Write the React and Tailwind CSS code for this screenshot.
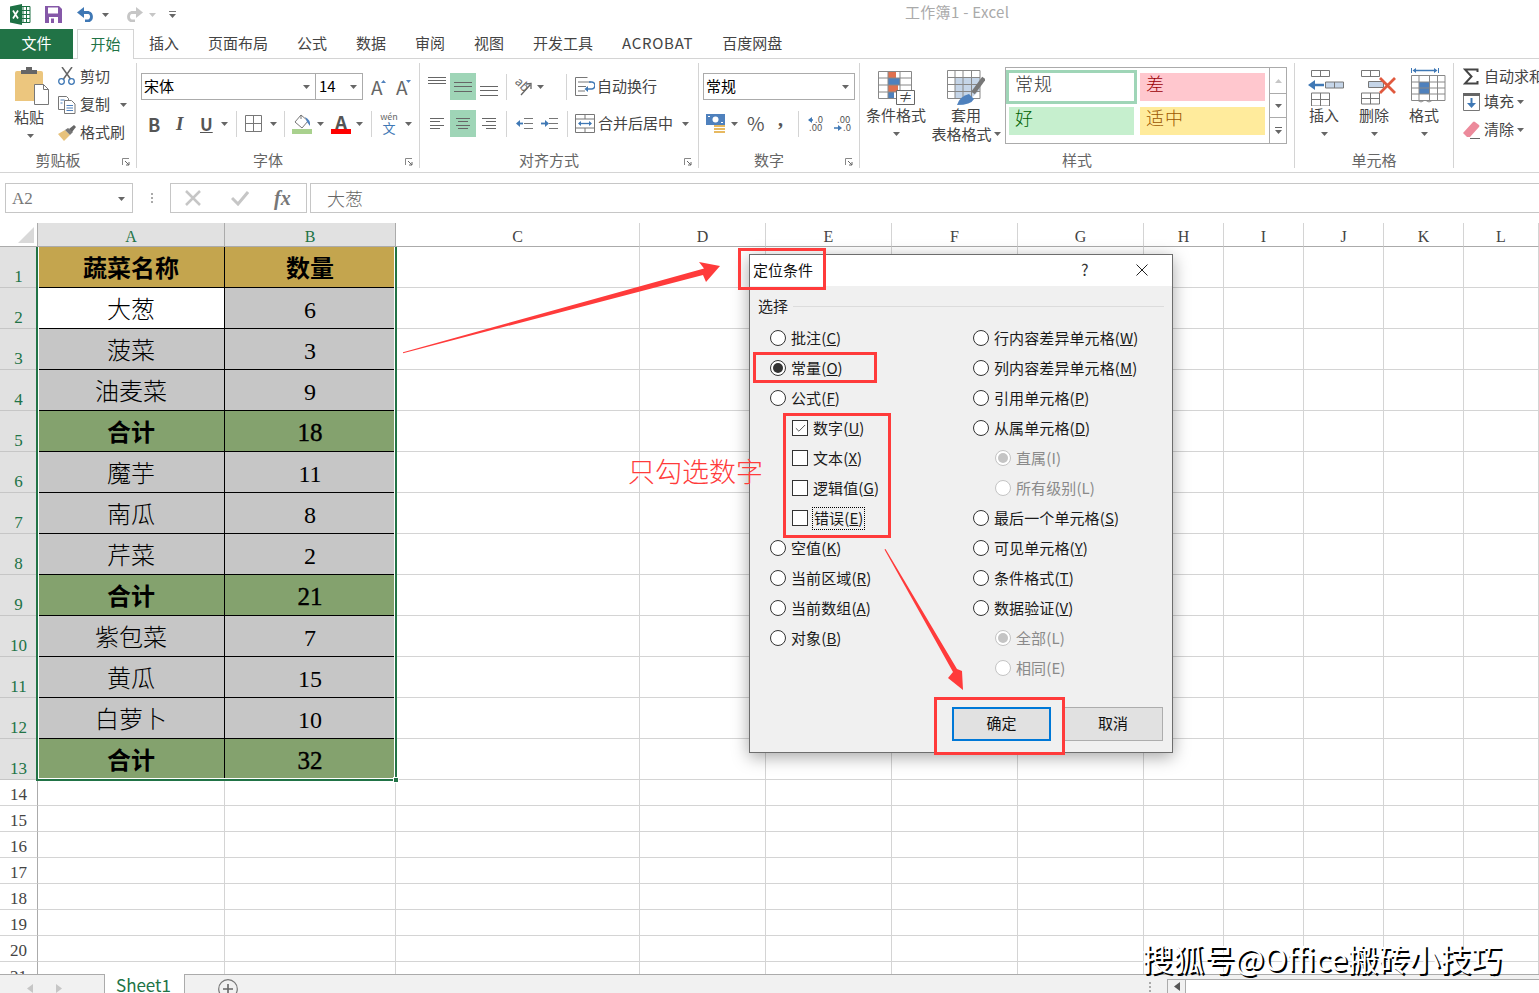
import { Check } from "lucide-react";

const SANS = "font-['Noto_Sans_CJK_SC',sans-serif]";
const SERIF = "font-['Liberation_Serif','Noto_Sans_CJK_SC',serif]";
const COLS = "grid grid-cols-[38px_187px_171px_244px_126px_126px_126px_126px_80px_80px_80px_80px_75px]";

const LETTERS = ["A", "B", "C", "D", "E", "F", "G", "H", "I", "J", "K", "L"];

const tableRows = [
  ["蔬菜名称", "数量", "head"],
  ["大葱", "6", "first"],
  ["菠菜", "3", "item"],
  ["油麦菜", "9", "item"],
  ["合计", "18", "total"],
  ["魔芋", "11", "item"],
  ["南瓜", "8", "item"],
  ["芹菜", "2", "item"],
  ["合计", "21", "total"],
  ["紫包菜", "7", "item"],
  ["黄瓜", "15", "item"],
  ["白萝卜", "10", "item"],
  ["合计", "32", "total"],
];

const nameFills = {
  head: "bg-[#c4a54e] font-bold",
  first: "bg-white font-light",
  item: "bg-[#c6c6c6] font-light",
  total: "bg-[#84a26e] font-bold",
};

const countFills = {
  head: "bg-[#c4a54e] font-bold",
  first: "bg-[#c6c6c6]",
  item: "bg-[#c6c6c6]",
  total: "bg-[#84a26e] text-[25px] [-webkit-text-stroke:0.4px_#000]",
};

function Caret({ className = "", color = "#666" }) {
  return (
    <svg width="7" height="4" className={`shrink-0 ${className}`}>
      <path d="M0 0h7L3.5 4z" fill={color} />
    </svg>
  );
}

function Sep({ className = "" }) {
  return <div className={`h-[26px] w-px shrink-0 bg-[#d4d4d4] ${className}`} />;
}

function Launcher() {
  return (
    <svg width="8" height="8" className="shrink-0">
      <path d="M.5 7V.5H7" fill="none" stroke="#888" />
      <path d="M3 3l4 4M7 4v3H4" fill="none" stroke="#666" />
    </svg>
  );
}

function Group({ className, label, launcher, children }) {
  return (
    <div className={`flex h-[105px] shrink-0 flex-col border-r border-[#d4d4d4] ${className}`}>
      <div className="h-[89px]">{children}</div>
      <div className="flex h-[16px] items-center">
        <div className="flex-1 pb-[2px] text-center text-[15px] leading-none text-[#666]">{label}</div>
        {launcher && (
          <div className="flex w-[20px] justify-center pt-[3px]">
            <Launcher />
          </div>
        )}
      </div>
    </div>
  );
}

function Combo({ className, text }) {
  return (
    <div className={`flex h-[27px] shrink-0 items-center justify-between border border-[#ababab] bg-white pl-[2px] pr-[5px] text-[15px] text-black ${className}`}>
      <span className="pb-[2px]">{text}</span>
      <Caret />
    </div>
  );
}

function ExcelLogo() {
  return (
    <svg width="21" height="21" className="shrink-0">
      <path d="M8 2.5h12v16H8z" fill="#fff" stroke="#1e7145" />
      <path d="M13 2.5v16M8 6.5h12M8 10.5h12M8 14.5h12M16.5 2.5v16" stroke="#1e7145" />
      <path d="M0 2.5L12 0v21L0 18.5z" fill="#1e7145" />
      <path d="M3 6.5l5 8M8 6.5l-5 8" stroke="#fff" strokeWidth="1.7" />
    </svg>
  );
}

function SaveIcon() {
  return (
    <svg width="17" height="17" className="shrink-0">
      <path d="M0 0h14l3 3v14H0z" fill="#8558a8" />
      <path d="M3 1.5h10v6H3z" fill="#fff" />
      <path d="M4 11h9v6H4z" fill="#fff" />
      <path d="M6 12.5h3v4.5H6z" fill="#8558a8" />
    </svg>
  );
}

function UndoIcon({ color, flip }) {
  return (
    <svg width="19" height="15" className={`shrink-0 ${flip ? "-scale-x-100" : ""}`}>
      <path d="M4 5.5h7.500a4.500 4.500 0 0 1 0 8.500H8" fill="none" stroke={color} strokeWidth="2.800" />
      <path d="M7 0L0 5.500 7 11z" fill={color} />
    </svg>
  );
}

function Scissors() {
  return (
    <svg width="18" height="18" className="shrink-0">
      <path d="M4 0l8.5 12M14 0L5.5 12" fill="none" stroke="#666" strokeWidth="1.5" />
      <circle cx="3.5" cy="14.5" r="2.8" fill="none" stroke="#3f78b5" strokeWidth="1.3" />
      <circle cx="13.5" cy="14.5" r="2.8" fill="none" stroke="#3f78b5" strokeWidth="1.3" />
    </svg>
  );
}

function CopyIcon() {
  return (
    <svg width="18" height="18" className="shrink-0">
      <path d="M.5.5h8l2 2v11H.5z" fill="#fff" stroke="#777" />
      <path d="M6.5 4.5h7l3.5 3.5v9.5H6.5z" fill="#fff" stroke="#777" />
      <path d="M8.5 9.5h6.5M8.5 12h6.5M8.5 14.5h6.5" stroke="#4f81bd" />
      <path d="M2.5 4h4M2.5 7h2" stroke="#4f81bd" />
    </svg>
  );
}

function Painter() {
  return (
    <svg width="18" height="16" className="shrink-0">
      <path d="M0 9l7-4 5 5-6 6z" fill="#e7c27c" />
      <path d="M7 5l3-2 5 4-3 3z" fill="#777" />
      <path d="M11 4l5-4 2 2-4 5z" fill="#666" />
    </svg>
  );
}

function PasteIcon() {
  return (
    <svg width="35" height="38" className="shrink-0">
      <path d="M0 6q0-2 2-2h24q2 0 2 2v28H0z" fill="#ecc67e" />
      <path d="M6 3h5V0h6v3h5v4H6z" fill="#666" />
      <path d="M19.5 17.5h9l5 5v15h-14z" fill="#fff" stroke="#777" />
      <path d="M28.5 17.5v5h5" fill="none" stroke="#777" />
    </svg>
  );
}

function BorderIcon() {
  return (
    <svg width="17" height="17" className="shrink-0">
      <path d="M.5.5h16v16H.5zM8.5.5v16M.5 8.5h16" fill="none" stroke="#777" />
    </svg>
  );
}

function FillIcon() {
  return (
    <div className="flex w-[20px] shrink-0 flex-col items-center">
      <svg width="20" height="15">
        <path d="M9 1l7 6-6 7-7-6z" fill="#fff" stroke="#777" />
        <path d="M9 1v4" stroke="#777" />
        <path d="M13 3q6 3 5 9l-3-4z" fill="#4f81bd" />
      </svg>
      <div className="h-[5px] w-[20px] bg-[#a9d18e]" />
    </div>
  );
}

function FontColor() {
  return (
    <div className="flex w-[20px] shrink-0 flex-col items-center">
      <div className="h-[15px] text-[19px] font-bold leading-[16px] text-[#555]">A</div>
      <div className="h-[5px] w-[20px] bg-[#ff0000]" />
    </div>
  );
}

function Wen() {
  return (
    <div className="flex w-[16px] shrink-0 flex-col items-center pb-[2px] leading-none">
      <span className="text-[9px] leading-[9px] text-[#666]">wén</span>
      <span className="text-[13px] leading-[13px] text-[#3f78b5]">文</span>
    </div>
  );
}

function AlignV({ ys }) {
  return (
    <svg width="18" height="27" className="shrink-0">
      {ys.map((y) => (
        <path key={y} d={`M0 ${y + 0.5}h18`} stroke="#666" />
      ))}
    </svg>
  );
}

function AlignH({ w = 14, mode }) {
  const rows = [
    [8, w],
    [11, w - 4],
    [15, w],
    [18, w - 4],
  ];
  return (
    <svg width={w} height="27" className="shrink-0">
      {rows.map(([y, len]) => {
        const x = mode === "left" ? 0 : mode === "right" ? w - len : (w - len) / 2;
        return <path key={y} d={`M${x} ${y + 0.5}h${len}`} stroke="#666" />;
      })}
    </svg>
  );
}

function Orient() {
  return (
    <svg width="18" height="18" className="shrink-0 overflow-visible">
      <text x="0" y="9" fontSize="12" fill="#666" transform="rotate(45 5 6)">ab</text>
      <path d="M6 17l9-10M11 6l5-.5V11" fill="none" stroke="#666" strokeWidth="1.300" />
    </svg>
  );
}

function WrapIcon() {
  return (
    <svg width="20" height="19" className="shrink-0">
      <path d="M.5.5h12M.5.5v18h12M3 5h13M3 9.500h8M3 14h7" fill="none" stroke="#777" />
      <path d="M14 5h2.500a2.500 2.500 0 0 1 0 7H11" fill="none" stroke="#3f78b5" strokeWidth="1.600" />
      <path d="M13 9l-3.500 3 3.500 3z" fill="#3f78b5" />
    </svg>
  );
}

function MergeIcon() {
  return (
    <svg width="20" height="19" className="shrink-0">
      <path d="M.5.5h19v18H.5zM.5 5h19M.5 14h19M10 .5V5M10 14v4.500" fill="none" stroke="#777" />
      <path d="M4 9.500h12" stroke="#3f78b5" strokeWidth="1.300" />
      <path d="M6 7L3 9.500 6 12zM14 7l3 2.500-3 2.500z" fill="#3f78b5" />
    </svg>
  );
}

function IndentIcon({ right }) {
  return (
    <svg width="17" height="11" className="shrink-0">
      <path d="M8 .5h9M8 5.500h9M8 10.500h9" stroke="#777" />
      {right ? (
        <>
          <path d="M0 5.500h5" stroke="#3f78b5" strokeWidth="1.800" />
          <path d="M4 2l4 3.500-4 3.500z" fill="#3f78b5" />
        </>
      ) : (
        <>
          <path d="M2 5.500h5" stroke="#3f78b5" strokeWidth="1.800" />
          <path d="M4 2L0 5.500 4 9z" fill="#3f78b5" />
        </>
      )}
    </svg>
  );
}

function MoneyIcon() {
  return (
    <svg width="20" height="20" className="shrink-0">
      <path d="M0 0h19v11H0z" fill="#4f81bd" />
      <circle cx="9.500" cy="5.500" r="3" fill="#fff" />
      <path d="M2 2.500h2M15 8.500h2" stroke="#fff" />
      <path d="M8 12h11M8 15h11M8 18h11" stroke="#e7b961" strokeWidth="2" />
    </svg>
  );
}

function DecimalIcon({ inc }) {
  return (
    <svg width="17" height="17" className="shrink-0 overflow-visible">
      {inc ? (
        <>
          <path d="M1 5h4" stroke="#3f78b5" strokeWidth="1.500" />
          <path d="M4 2L0 5l4 3z" fill="#3f78b5" />
          <text x="7" y="8" fontSize="9.500" fill="#555">.0</text>
          <text x="1" y="16" fontSize="9.500" fill="#555">.00</text>
        </>
      ) : (
        <>
          <text x="3" y="8" fontSize="9.500" fill="#555">.00</text>
          <path d="M0 13h5" stroke="#3f78b5" strokeWidth="1.500" />
          <path d="M4 10l4 3-4 3z" fill="#3f78b5" />
          <text x="9" y="16" fontSize="9.500" fill="#555">.0</text>
        </>
      )}
    </svg>
  );
}

function CondIcon() {
  return (
    <svg width="37" height="34" className="overflow-visible">
      <path d="M10 .5h8V7h-8z" fill="#e0714f" />
      <path d="M10 7h12v7H10z" fill="#4f81bd" />
      <path d="M10 14h10v7H10z" fill="#e0714f" />
      <path d="M10 21h6v6.500h-6z" fill="#4f81bd" />
      <path d="M.5.5h33v27H.5zM10 .5v27M22 .5v27M.5 7h33M.5 14h33M.5 21h33" fill="none" stroke="#888" />
      <path d="M18.500 19.500h18v14h-18z" fill="#fff" stroke="#666" />
      <text x="27.500" y="31" fontSize="14" textAnchor="middle" fill="#444">≠</text>
    </svg>
  );
}

function TableIcon() {
  return (
    <svg width="38" height="35">
      <path d="M8 8h25v12l-9 8.500H8z" fill="#c5d5e8" />
      <path d="M.5.5h32.500v28H.5zM8 .5v28M16 .5v28M24.500 .5v28M.5 7.500h32.500M.5 14.500h32.500M.5 21.500h32.500" fill="none" stroke="#888" />
      <path d="M37 8L26 23" stroke="#777" strokeWidth="4.500" />
      <path d="M10 35q3-9 12-11l5 5q-3 6-17 6z" fill="#4f81bd" />
    </svg>
  );
}

function InsertIcon() {
  return (
    <svg width="37" height="36">
      <path d="M3.500.5h18v6h-18zM12.500.5v6" fill="none" stroke="#777" />
      <path d="M17.500 12h18v6h-18zM26.500 12v6" fill="#c5d5e8" stroke="#777" />
      <path d="M3.500 23h18v13h-18zM12.500 23v13M3.500 29.500h18" fill="none" stroke="#777" />
      <path d="M5 15h11" stroke="#3f78b5" strokeWidth="2.500" />
      <path d="M7 10L0 15l7 5z" fill="#3f78b5" />
    </svg>
  );
}

function DeleteIcon() {
  return (
    <svg width="37" height="36">
      <path d="M.5.5h18v6H.5zM9.500.5v6" fill="none" stroke="#777" />
      <path d="M7.500 11.500h15v6h-15z" fill="#c5d5e8" stroke="#777" />
      <path d="M.5 23h18v11H.5zM9.500 23v11M.5 28.500h18" fill="none" stroke="#777" />
      <path d="M19 8l15 15M34 8L19 23" stroke="#e0593e" strokeWidth="2.800" />
    </svg>
  );
}

function FormatIcon() {
  return (
    <svg width="35" height="36">
      <path d="M.5 0v5M27.500 0v5" stroke="#3f78b5" />
      <path d="M4 2.500h20" stroke="#3f78b5" strokeWidth="1.500" />
      <path d="M5 0L1.500 2.500 5 5zM23 0l3.500 2.500L23 5z" fill="#3f78b5" />
      <path d="M8 14h10.500v12H8z" fill="#4f81bd" />
      <path d="M.5 7.500h33.500v25H.5zM8 7.500v25M18.500 7.500v25M26.500 7.500v25M.5 14h33.500M.5 20h33.500M.5 26h33.500" fill="none" stroke="#888" />
      <path d="M7 32.500q3 3 6 0M15 32.500q3 3 6 0" fill="none" stroke="#888" />
    </svg>
  );
}

function SigmaIcon() {
  return (
    <svg width="16" height="17" className="shrink-0">
      <path d="M14.500 4V1.500H2L8.500 8.500 2 15.500h12.500V13" fill="none" stroke="#444" strokeWidth="2" />
    </svg>
  );
}

function FillDown() {
  return (
    <svg width="17" height="18" className="shrink-0">
      <path d="M.5.5h16v17H.5z" fill="#fff" stroke="#777" />
      <path d="M0 0h17v3H0z" fill="#666" />
      <path d="M8.500 5v8" stroke="#3f78b5" strokeWidth="2" />
      <path d="M4 10l4.500 5 4.500-5z" fill="#3f78b5" />
    </svg>
  );
}

function Eraser() {
  return (
    <svg width="18" height="18" className="shrink-0">
      <path d="M0 12L10 1q1-1 2 0l4 3q1 1 0 2L7 16H4z" fill="#ec8a9b" />
      <path d="M7 17.500h10" stroke="#666" />
    </svg>
  );
}

function BigButton({ icon, lines, iconClass = "mt-[7px]", className }) {
  return (
    <div className={`flex shrink-0 flex-col items-center text-[15px] leading-none text-[#444] ${className}`}>
      <div className={`flex h-[36px] items-start ${iconClass}`}>{icon}</div>
      {lines}
    </div>
  );
}

function Ribbon() {
  return (
    <div className="flex h-[114px] border-b border-[#d4d4d4] pt-[4px] text-[15px] leading-none text-[#444]">
      <Group className="w-[137px]" label="剪贴板" launcher>
        <div className="flex">
          <div className="ml-[14px] flex w-[36px] flex-col items-start">
            <div className="ml-[1px] mt-[4px] h-[38px]">
              <PasteIcon />
            </div>
            <span className="mt-[4px]">粘贴</span>
            <Caret className="ml-[13px] mt-[10px]" />
          </div>
          <div className="ml-[8px] flex flex-col">
            <div className="flex h-[26px] items-center gap-[4px]">
              <Scissors />
              <span className="pb-[2px]">剪切</span>
            </div>
            <div className="mt-[3px] flex h-[26px] items-center gap-[4px]">
              <CopyIcon />
              <span className="pb-[4px]">复制</span>
              <Caret className="ml-[6px]" />
            </div>
            <div className="mt-[2px] flex h-[26px] items-center gap-[4px]">
              <Painter />
              <span className="pb-[4px]">格式刷</span>
            </div>
          </div>
        </div>
      </Group>

      <Group className="w-[283px]" label="字体" launcher>
        <div className="mt-[10px] flex h-[27px] items-center pl-[4px]">
          <Combo className="w-[175px]" text="宋体" />
          <Combo className="-ml-px w-[48px] pl-[3px]" text="14" />
          <div className="ml-[8px] flex w-[15px] items-start text-[19px] text-[#666]">
            A
            <svg width="5" height="3" className="-ml-[2px] mt-[3px] shrink-0"><path d="M0 3h5L2.500 0z" fill="#4f81bd" /></svg>
          </div>
          <div className="ml-[10px] flex w-[15px] items-start text-[19px] text-[#666]">
            A
            <svg width="5" height="3" className="-ml-[2px] mt-[3px] shrink-0"><path d="M0 0h5L2.500 3z" fill="#4f81bd" /></svg>
          </div>
        </div>
        <div className="mt-[10px] flex h-[27px] items-center">
          <span className="ml-[11px] w-[11px] text-[18px] font-bold text-[#555]">B</span>
          <span className={`ml-[17px] w-[11px] text-[19px] font-bold italic text-[#555] ${SERIF}`}>I</span>
          <span className="ml-[13px] w-[12px] text-[17px] font-bold text-[#555] underline">U</span>
          <Caret className="ml-[9px]" />
          <Sep className="ml-[8px]" />
          <div className="ml-[8px]"><BorderIcon /></div>
          <Caret className="ml-[8px]" />
          <Sep className="ml-[7px]" />
          <div className="ml-[7px]"><FillIcon /></div>
          <Caret className="ml-[5px]" />
          <div className="ml-[7px]"><FontColor /></div>
          <Caret className="ml-[5px]" />
          <Sep className="ml-[8px]" />
          <div className="ml-[9px]"><Wen /></div>
          <Caret className="ml-[8px]" />
        </div>
      </Group>

      <Group className="w-[279px]" label="对齐方式" launcher>
        <div className="mt-[10px] flex h-[27px] items-center">
          <div className="ml-[8px]"><AlignV ys={[4, 7, 10]} /></div>
          <div className="ml-[4px] h-[27px] w-[26px] bg-[#9fd5b7] pl-[4px]"><AlignV ys={[9, 13, 18]} /></div>
          <div className="ml-[4px]"><AlignV ys={[13, 17, 22]} /></div>
          <Sep className="ml-[8px]" />
          <div className="ml-[8px]"><Orient /></div>
          <Caret className="ml-[4px]" />
          <Sep className="ml-[22px]" />
          <div className="ml-[8px]"><WrapIcon /></div>
          <span className="ml-[2px] pb-[3px]">自动换行</span>
        </div>
        <div className="mt-[10px] flex h-[27px] items-center">
          <div className="ml-[10px]"><AlignH mode="left" /></div>
          <div className="ml-[6px] h-[27px] w-[26px] bg-[#9fd5b7] pl-[6px]"><AlignH mode="center" /></div>
          <div className="ml-[6px]"><AlignH mode="right" /></div>
          <Sep className="ml-[10px]" />
          <div className="ml-[9px]"><IndentIcon /></div>
          <div className="ml-[8px]"><IndentIcon right /></div>
          <Sep className="ml-[9px]" />
          <div className="ml-[7px]"><MergeIcon /></div>
          <span className="ml-[3px] pb-[2px]">合并后居中</span>
          <Caret className="ml-[9px]" />
        </div>
      </Group>

      <Group className="w-[161px]" label="数字" launcher>
        <div className="mt-[10px] flex h-[27px] pl-[4px]">
          <Combo className="w-[152px]" text="常规" />
        </div>
        <div className="mt-[10px] flex h-[27px] items-center">
          <div className="ml-[7px]"><MoneyIcon /></div>
          <Caret className="ml-[5px]" />
          <span className="ml-[9px] w-[16px] pb-[2px] text-[19px] text-[#555]">%</span>
          <span className={`ml-[15px] w-[6px] pb-[10px] text-[20px] font-bold text-[#555] ${SERIF}`}>,</span>
          <Sep className="ml-[14px]" />
          <div className="ml-[9px]"><DecimalIcon inc /></div>
          <div className="ml-[9px]"><DecimalIcon /></div>
        </div>
      </Group>

      <Group className="w-[435px]" label="样式">
        <div className="flex">
          <BigButton
            className="ml-[6px] w-[60px]"
            icon={<div className="ml-[1px]"><CondIcon /></div>}
            iconClass="mt-[8px]"
            lines={
              <>
                <span>条件格式</span>
                <Caret className="mt-[10px]" />
              </>
            }
          />
          <BigButton
            className="ml-[4px] w-[72px]"
            icon={<TableIcon />}
            lines={
              <>
                <span className="mt-[1px]">套用</span>
                <span className="mt-[4px] flex items-center gap-[2px] whitespace-nowrap">表格格式<Caret /></span>
              </>
            }
          />
          <div className="ml-[3px] mt-[4px] flex h-[77px] w-[282px] border border-[#ababab] bg-white">
            <div className="grid grid-cols-[125px_125px] grid-rows-[28px_28px] gap-[6px] pl-[3px] pr-[4px] pt-[5px] text-[18px] leading-[20px]">
              <div className="bg-white pl-[6px] font-light tracking-[1px] text-[#333] outline-[3px] outline-[#9fd5b7]">常规</div>
              <div className="bg-[#ffc7ce] pl-[6px] font-light text-[#9c0006]">差</div>
              <div className="bg-[#c6efce] pl-[6px] font-light text-[#006100]">好</div>
              <div className="bg-[#ffeb9c] pl-[6px] font-light tracking-[1px] text-[#9c5700]">适中</div>
            </div>
            <div className="flex flex-1 flex-col border-l border-[#ababab]">
              <div className="flex h-[26px] items-center justify-center border-b border-[#ababab]">
                <svg width="7" height="4"><path d="M0 4h7L3.500 0z" fill="#c6c6c6" /></svg>
              </div>
              <div className="flex h-[24px] items-center justify-center border-b border-[#ababab]">
                <Caret />
              </div>
              <div className="flex flex-1 flex-col items-center justify-center gap-[2px]">
                <div className="h-px w-[7px] bg-[#666]" />
                <Caret />
              </div>
            </div>
          </div>
        </div>
      </Group>

      <Group className="w-[159px]" label="单元格">
        <div className="flex pl-[4px]">
          <BigButton className="w-[50px]" icon={<div className="ml-[5px]"><InsertIcon /></div>} lines={<><span className="mt-[1px]">插入</span><Caret className="mt-[10px]" /></>} />
          <BigButton className="w-[50px]" icon={<div className="ml-[10px]"><DeleteIcon /></div>} lines={<><span className="mt-[1px]">删除</span><Caret className="mt-[10px]" /></>} />
          <BigButton className="w-[50px]" icon={<div className="ml-[8px]"><FormatIcon /></div>} iconClass="mt-[5px]" lines={<><span className="mt-[3px]">格式</span><Caret className="mt-[10px]" /></>} />
        </div>
      </Group>

      <div className="flex h-[89px] min-w-0 flex-1 flex-col overflow-hidden pl-[9px] whitespace-nowrap">
        <div className="flex h-[26px] shrink-0 items-center gap-[5px]">
          <SigmaIcon />
          <span className="pb-[2px]">自动求和</span>
        </div>
        <div className="flex h-[26px] shrink-0 items-center gap-[4px]">
          <FillDown />
          <span className="pb-[4px]">填充</span>
          <Caret className="-ml-[1px]" />
        </div>
        <div className="mt-[2px] flex h-[26px] shrink-0 items-center gap-[3px]">
          <Eraser />
          <span className="pb-[4px]">清除</span>
          <Caret />
        </div>
      </div>
    </div>
  );
}

function FormulaBar() {
  return (
    <div className="mt-[10px] flex h-[30px] pl-[5px]">
      <div className={`flex w-[128px] items-center justify-between border border-[#c6c6c6] pl-[6px] pr-[7px] pt-[1px] text-[17px] text-[#777] ${SERIF}`}>
        A2
        <Caret />
      </div>
      <div className="flex w-[37px] flex-col items-center justify-center gap-[2px]">
        <div className="h-[2px] w-[2px] bg-[#aaa]" />
        <div className="h-[2px] w-[2px] bg-[#aaa]" />
        <div className="h-[2px] w-[2px] bg-[#aaa]" />
      </div>
      <div className="flex w-[137px] items-center border border-[#c6c6c6]">
        <svg width="16" height="16" className="ml-[14px]">
          <path d="M1 1l14 14M15 1L1 15" stroke="#c6c6c6" strokeWidth="2.500" />
        </svg>
        <svg width="18" height="16" className="ml-[30px]">
          <path d="M1 8l6 6L17 2" fill="none" stroke="#c6c6c6" strokeWidth="3" />
        </svg>
        <span className={`ml-[25px] text-[20px] font-bold italic text-[#777] ${SERIF}`}>fx</span>
      </div>
      <div className="ml-[3px] flex flex-1 items-center border border-r-0 border-[#c6c6c6] pl-[16px] text-[18px] font-light text-[#666]">
        大葱
      </div>
    </div>
  );
}

function ColumnHeader() {
  return (
    <div className={`${COLS} mt-[10px] h-[24px] ${SERIF} text-[16px]`}>
      <div className="flex items-end justify-end border-b border-r border-[#ababab] pb-[3px] pr-[3px]">
        <svg width="16" height="16"><path d="M16 0v16H0z" fill="#d9d9d9" /></svg>
      </div>
      {LETTERS.map((c, i) => (
        <div
          key={c}
          className={
            i < 2
              ? "flex items-end justify-center border-b border-r border-b-[#ababab] border-r-[#ababab] bg-[#e1e1e1] text-[#217346]"
              : "flex items-end justify-center border-b border-r border-b-[#ababab] border-r-[#d4d4d4] text-[#444]"
          }
        >
          <span className="leading-[19px]">{c}</span>
        </div>
      ))}
    </div>
  );
}

function BlankCells({ from }) {
  return LETTERS.slice(from).map((c) => <div key={c} className="border-b border-r border-[#d4d4d4]" />);
}

function SheetGrid() {
  const plain = [14, 15, 16, 17, 18, 19, 20, 21];
  return (
    <div className={`relative min-h-0 flex-1 overflow-hidden ${SERIF}`}>
      {tableRows.map((row, i) => (
        <div key={i} className={`${COLS} h-[41px]`}>
          <div className="flex items-end justify-center border-b border-r border-b-[#c6c6c6] border-r-[#ababab] bg-[#e1e1e1] text-[17px] leading-[21px] text-[#217346]">
            {i + 1}
          </div>
          <div className={`flex items-center justify-center border-b border-r border-black pt-[3px] text-[24px] leading-[36px] text-black ${nameFills[row[2]]}`}>
            {row[0]}
          </div>
          <div className={`flex items-center justify-center border-b border-r border-black pt-[3px] text-[24px] leading-[36px] text-black ${countFills[row[2]]}`}>
            {row[1]}
          </div>
          <BlankCells from={2} />
        </div>
      ))}
      {plain.map((n) => (
        <div key={n} className={`${COLS} h-[26px]`}>
          <div className="flex items-end justify-center border-b border-r border-b-[#d4d4d4] border-r-[#ababab] text-[17px] leading-[20px] text-[#444]">
            {n}
          </div>
          <BlankCells from={0} />
        </div>
      ))}
      {/* selection frame */}
      <div className="absolute left-[36px] top-[-2px] h-[536px] w-[361px] border-2 border-[#217346] shadow-[inset_1px_-1px_0_#fff,inset_-1px_0_0_#fff]" />
      <div className="absolute left-[393px] top-[530px] h-[6px] w-[6px] border border-white bg-[#217346]" />
    </div>
  );
}

function SheetTabs() {
  return (
    <div className="flex h-[19px] border-t border-[#ababab] bg-[#f1f1f1]">
      <div className="flex w-[104px] items-center pl-[27px] pt-[8px]">
        <svg width="6" height="9"><path d="M6 0v9L0 4.500z" fill="#c6c6c6" /></svg>
        <svg width="6" height="9" className="ml-[23px]"><path d="M0 0v9l6-4.500z" fill="#c6c6c6" /></svg>
      </div>
      <div className="-mt-px h-[20px] w-[81px] border-x border-[#ababab] bg-white pl-[11px] text-[17px] leading-[21px] text-[#217346]">
        Sheet1
      </div>
      <svg width="20" height="20" className="ml-[33px] mt-[4px] shrink-0">
        <circle cx="10" cy="10" r="9.300" fill="none" stroke="#777" strokeWidth="1.200" />
        <path d="M10 5v10M5 10h10" stroke="#666" strokeWidth="1.600" />
      </svg>
      <div className="ml-[911px] flex w-[3px] flex-col gap-[2px] pt-[7px]">
        <div className="h-[2px] w-[2px] bg-[#aaa]" />
        <div className="h-[2px] w-[2px] bg-[#aaa]" />
        <div className="h-[2px] w-[2px] bg-[#aaa]" />
      </div>
      <div className="ml-[15px] mt-[4px] flex flex-1 border-l border-t border-[#ababab]">
        <div className="flex w-[18px] items-center justify-center border-r border-[#ababab]">
          <svg width="6" height="9"><path d="M6 0v9L0 4.500z" fill="#555" /></svg>
        </div>
        <div className="flex-1 bg-white" />
      </div>
    </div>
  );
}

function Radio({ on, off }) {
  return (
    <div className={`flex h-[16px] w-[16px] shrink-0 items-center justify-center rounded-full border bg-white ${off ? "border-[#c4c4c4]" : "border-[#333]"}`}>
      {on && <div className={`h-[10px] w-[10px] rounded-full ${off ? "bg-[#c4c4c4]" : "bg-[#333]"}`} />}
    </div>
  );
}

function Box({ on }) {
  return (
    <div className="flex h-[16px] w-[16px] shrink-0 items-center justify-center border border-[#333] bg-white">
      {on && <Check size={13} strokeWidth={1.500} color="#333" />}
    </div>
  );
}

function Label({ text, hot, off }) {
  return (
    <span className={`tracking-[0.1px] ${off ? "text-[#8a8a8a]" : "text-[#1a1a1a]"}`}>
      {text}(
      {off ? hot : <u>{hot}</u>}
      )
    </span>
  );
}

const leftOptions = [
  ["radio", "批注", "C"],
  ["radio", "常量", "O", true],
  ["radio", "公式", "F"],
  ["box", "数字", "U", true],
  ["box", "文本", "X"],
  ["box", "逻辑值", "G"],
  ["box", "错误", "E", false, true],
  ["radio", "空值", "K"],
  ["radio", "当前区域", "R"],
  ["radio", "当前数组", "A"],
  ["radio", "对象", "B"],
];

const rightOptions = [
  ["行内容差异单元格", "W"],
  ["列内容差异单元格", "M"],
  ["引用单元格", "P"],
  ["从属单元格", "D"],
  ["直属", "I", true, true],
  ["所有级别", "L", false, true],
  ["最后一个单元格", "S"],
  ["可见单元格", "Y"],
  ["条件格式", "T"],
  ["数据验证", "V"],
  ["全部", "L", true, true],
  ["相同", "E", false, true],
];

function GotoDialog() {
  return (
    <div className="absolute left-[749px] top-[254px] flex h-[499px] w-[424px] flex-col border border-[#6d6d6d] bg-[#f0f0f0] text-[15px] leading-none shadow-[0_4px_16px_rgba(0,0,0,0.35)]">
      <div className="flex h-[31px] shrink-0 items-center bg-white pl-[3px] text-[#111]">
        <span className="pb-[3px]">定位条件</span>
        <span className="ml-[268px] pb-[3px] text-[16px] text-[#333]">?</span>
        <svg width="12" height="12" className="ml-[47px] mb-[1px]">
          <path d="M.5.5l11 11M11.500.5l-11 11" stroke="#222" />
        </svg>
      </div>
      <div className="mt-[10px] flex h-[20px] items-center pl-[8px] pr-[8px] text-[#222]">
        <span className="pb-[2px]">选择</span>
        <div className="ml-[5px] h-px flex-1 bg-[#dcdcdc]" />
      </div>
      <div className="mt-[7px] flex pl-[20px]">
        <div className="w-[203px]">
          {leftOptions.map(([kind, text, hot, on, focus]) => (
            <div key={hot} className={`flex h-[30px] items-center gap-[5px] ${kind === "box" ? "pl-[22px]" : ""}`}>
              {kind === "box" ? <Box on={on} /> : <Radio on={on} />}
              <span className={focus ? "-ml-[1px] border border-dotted border-black px-[1px] pb-[4px] pt-[2px]" : "pb-[2px]"}>
                <Label text={text} hot={hot} />
              </span>
            </div>
          ))}
        </div>
        <div>
          {rightOptions.map(([text, hot, on, off]) => (
            <div key={text} className={`flex h-[30px] items-center gap-[5px] ${off ? "pl-[22px]" : ""}`}>
              <Radio on={on} off={off} />
              <span className="pb-[2px]">
                <Label text={text} hot={hot} off={off} />
              </span>
            </div>
          ))}
        </div>
      </div>
      <div className="mt-[24px] flex justify-end gap-[12px] pr-[9px] text-[#111]">
        <div className="flex h-[34px] w-[99px] items-center justify-center border-2 border-[#0078d7] bg-[#e1e1e1] pb-[3px]">确定</div>
        <div className="flex h-[34px] w-[100px] items-center justify-center border border-[#adadad] bg-[#e1e1e1] pb-[3px]">取消</div>
      </div>
    </div>
  );
}

function Annotations() {
  return (
    <>
      <svg width="1539" height="993" className="pointer-events-none absolute left-0 top-0">
        <path d="M403 352.300L704 268.500 699 262 720 266 706 282 703 275 403 353.300z" fill="#ff3b3b" />
        <path d="M884.500 549.500L953 672 948 678 963 690 962 671 957 669 885.500 549z" fill="#ff3b3b" />
      </svg>
      <div className="absolute left-[738px] top-[248px] h-[42px] w-[88px] border-[3px] border-[#ff3b3b]" />
      <div className="absolute left-[753px] top-[352px] h-[31px] w-[124px] border-[3px] border-[#ff3b3b]" />
      <div className="absolute left-[783px] top-[413px] h-[125px] w-[108px] border-[3px] border-[#ff3b3b]" />
      <div className="absolute left-[934px] top-[697px] h-[58px] w-[131px] border-[3px] border-[#ff3b3b]" />
      <div className="absolute left-[628px] top-[452px] text-[27px] font-light leading-[38px] text-[#ff3b3b]">只勾选数字</div>
      <div className="absolute left-[1142px] top-[936px] whitespace-nowrap text-[31px] leading-[44px] tracking-[-0.1px] text-white [text-shadow:2px_2px_0_#000]">
        搜狐号@Office搬砖小技巧
      </div>
    </>
  );
}

export default function App() {
  return (
    <div className={`relative flex h-[993px] w-[1539px] flex-col overflow-hidden bg-white ${SANS}`}>
      {/* title bar */}
      <div className="flex h-[29px] shrink-0 items-center pl-[10px]">
        <ExcelLogo />
        <div className="ml-[14px]"><SaveIcon /></div>
        <div className="ml-[15px]"><UndoIcon color="#3f78b5" /></div>
        <Caret className="ml-[6px]" />
        <div className="ml-[15px]"><UndoIcon color="#c6c6c6" flip /></div>
        <Caret className="ml-[6px]" color="#c6c6c6" />
        <div className="ml-[13px] flex flex-col items-center gap-[2px]">
          <div className="h-px w-[7px] bg-[#777]" />
          <Caret />
        </div>
        <span className="ml-[729px] pb-[4px] text-[15px] tracking-[0.3px] text-[#aaa]">工作簿1 - Excel</span>
      </div>

      {/* tabs */}
      <div className="flex h-[30px] shrink-0 border-b border-[#d4d4d4] text-[15px] leading-none text-[#444]">
        <div className="flex h-[30px] w-[73px] items-center justify-center bg-[#217346] pb-[3px] text-white">文件</div>
        <div className="ml-[4px] flex h-[30px] w-[57px] items-center justify-center border-x border-t border-[#d4d4d4] bg-white pb-[3px] text-[#217346]">开始</div>
        <div className="flex items-center gap-[29px] pb-[3px] pl-[15px]">
          <span>插入</span>
          <span>页面布局</span>
          <span>公式</span>
          <span>数据</span>
          <span>审阅</span>
          <span>视图</span>
          <span>开发工具</span>
          <span className="tracking-[0.7px]">ACROBAT</span>
          <span>百度网盘</span>
        </div>
      </div>

      <Ribbon />
      <FormulaBar />
      <ColumnHeader />
      <SheetGrid />
      <SheetTabs />

      <GotoDialog />
      <Annotations />
    </div>
  );
}
